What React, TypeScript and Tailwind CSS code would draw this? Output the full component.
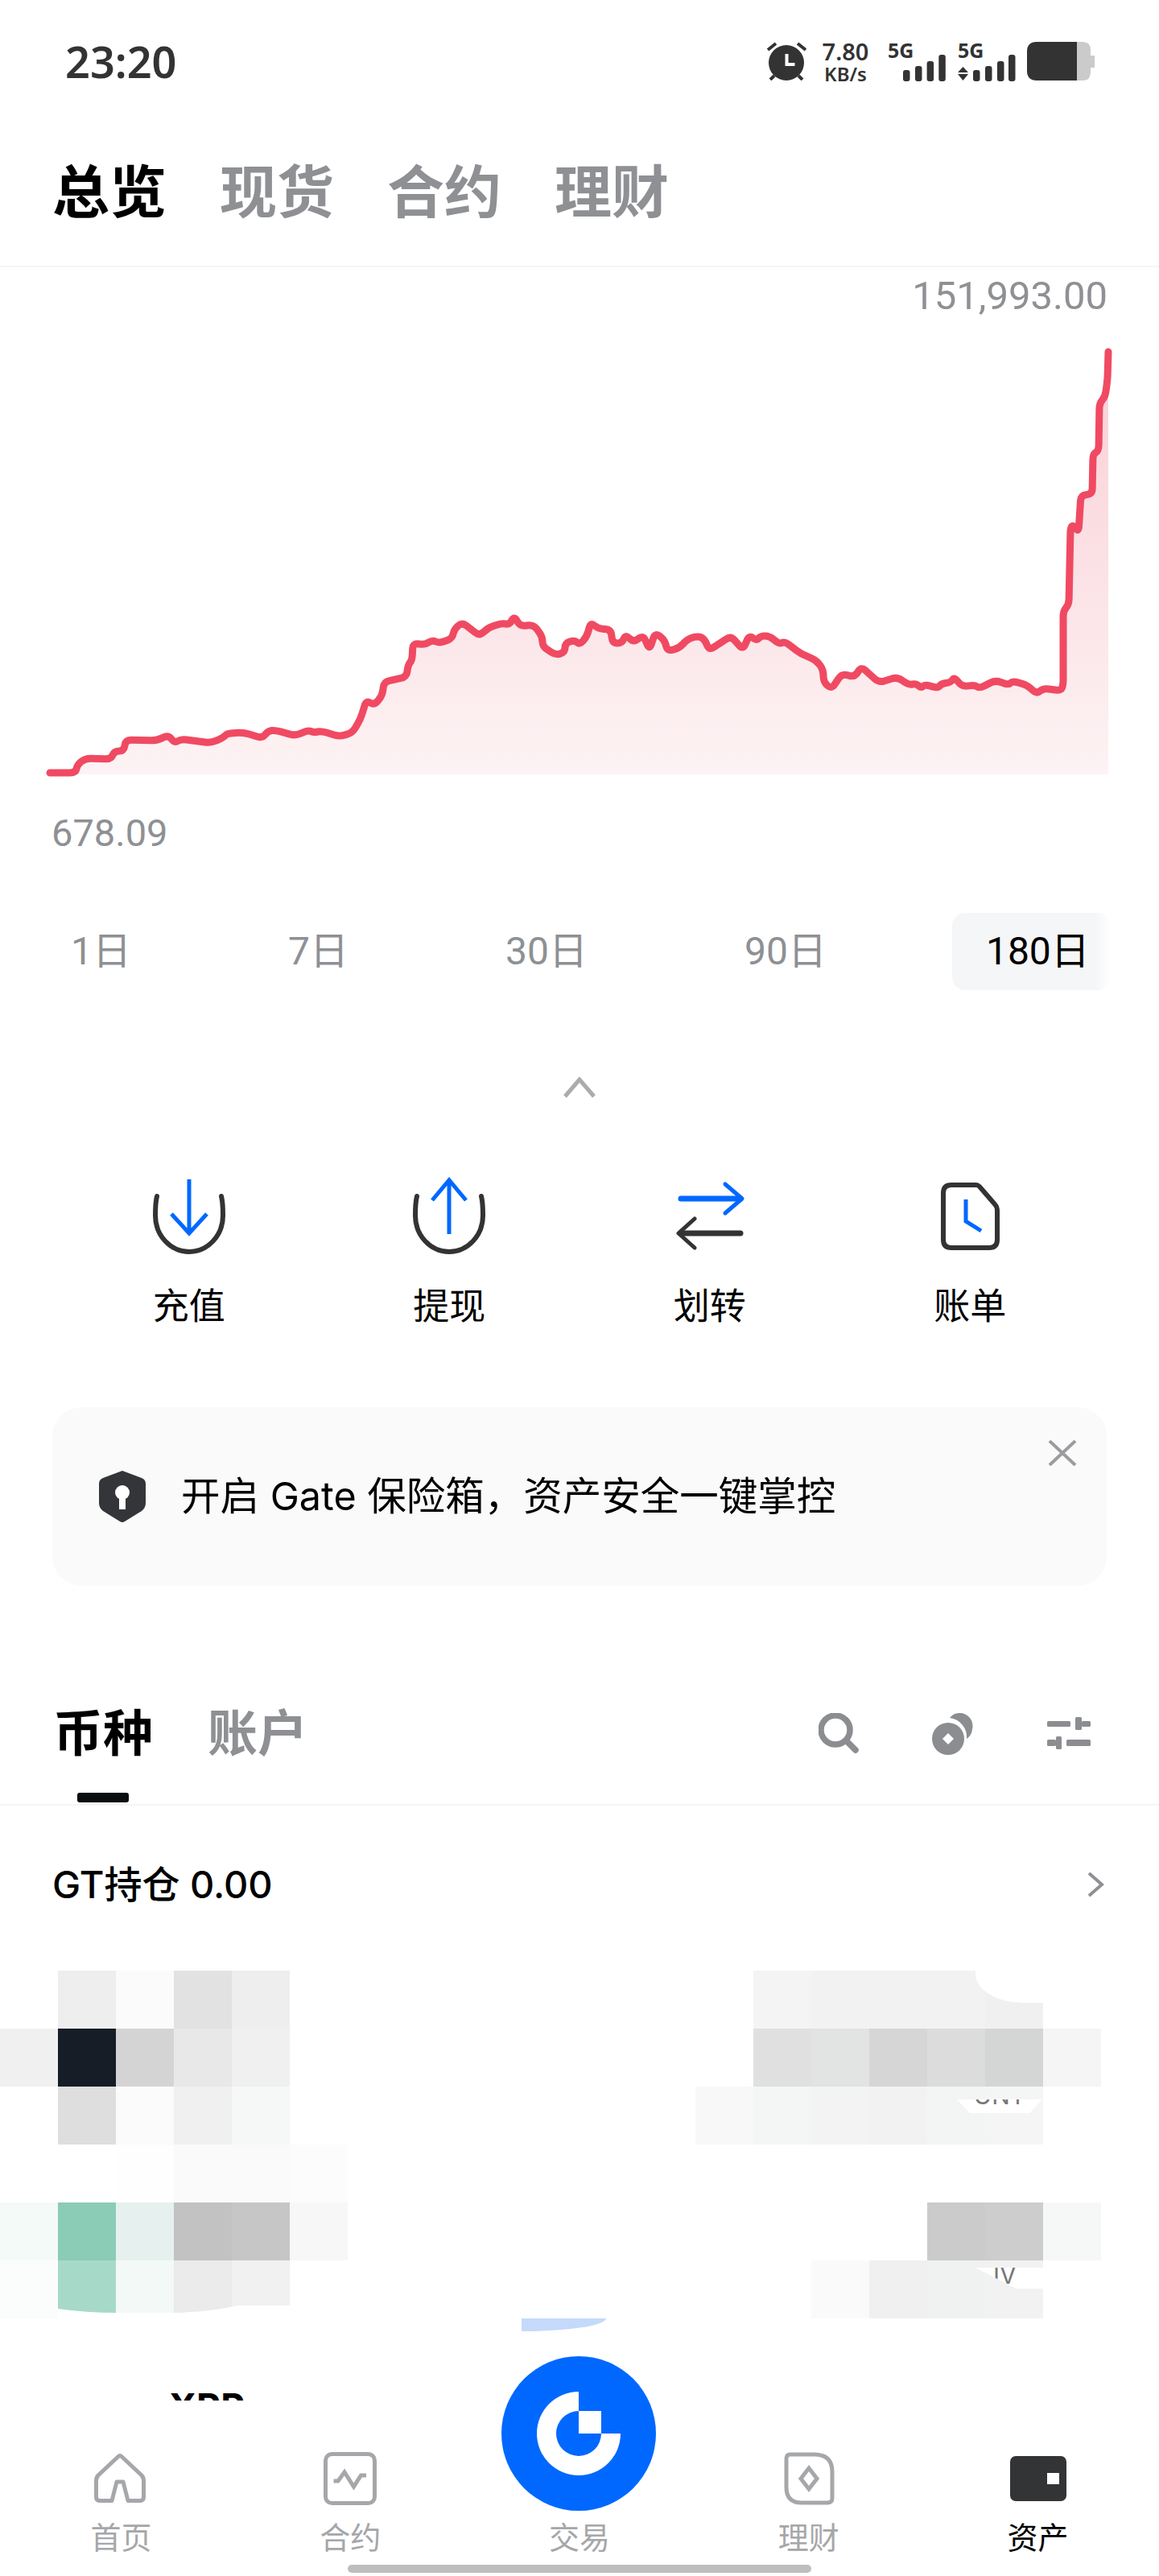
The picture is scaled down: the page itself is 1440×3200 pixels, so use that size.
const chartPoints = `62,960 94,960 96,950 106,942 138,943 142,933 154,933 156,919 195,920 209,913 217,923 225,918 262,923 278,916 282,911 303,910 326,917 333,908 342,907 367,914 383,907 390,910 399,908 422,915 438,910 448,893 455,870 465,876 475,864 477,847 505,841 507,826 512,820 513,799 528,801 537,795 546,799 562,793 564,782 574,773 596,790 606,780 624,774 633,776 639,765 646,778 663,776 674,791 674,803 691,814 702,810 702,799 714,795 720,801 729,791 734,773 743,781 759,782 761,799 773,799 777,788 787,798 799,789 807,807 814,786 826,795 829,809 844,805 855,793 869,790 876,795 881,808 908,790 923,807 931,789 940,796 945,790 956,790 968,800 975,797 995,812 1014,820 1023,832 1023,847 1033,856 1046,837 1062,841 1070,828 1092,848 1115,841 1129,851 1138,849 1145,855 1149,850 1165,855 1170,849 1181,848 1186,841 1195,853 1211,851 1217,855 1237,845 1253,851 1258,846 1276,851 1288,862 1296,855 1318,858 1321,851 1321,759 1328,751 1330,656 1333,652 1340,661 1343,615 1357,614 1358,564 1365,560 1366,501 1373,493 1376,472 1377,437`

// rounds the stair corners of the price line
function roundedPath(raw: string) {
  const pts = raw.split(' ').map((p) => p.split(',').map(Number))
  let d = `M${pts[0][0]} ${pts[0][1]}`
  for (let i = 1; i < pts.length - 1; i++) {
    const [x, y] = pts[i]
    const step = (o: number[]) => {
      const len = Math.hypot(o[0] - x, o[1] - y)
      const r = Math.min(7, len / 2)
      return [x + ((o[0] - x) / len) * r, y + ((o[1] - y) / len) * r]
    }
    const a = step(pts[i - 1])
    const b = step(pts[i + 1])
    d += ` L${a[0]} ${a[1]} Q${x} ${y} ${b[0]} ${b[1]}`
  }
  const last = pts[pts.length - 1]
  return `${d} L${last[0]} ${last[1]}`
}

// pixelated area of the coin list
const mosaic = [
  ['#fff', '#eeeeee', '#fbfbfb', '#e2e2e2', '#eeeeee', '#fff', '#fff', '#fff', '#fff', '#fff', '#fff', '#fff', '#fff', '#f4f4f4', '#f2f2f2', '#f2f2f2', '#f2f2f2', '#f0f0f0', '#fff', '#fff'],
  ['#f0f0f0', '#161d26', '#d4d4d4', '#e8e8e8', '#f0f0f0', '#fff', '#fff', '#fff', '#fff', '#fff', '#fff', '#fff', '#fff', '#e0e0e0', '#e2e3e3', '#d6d6d6', '#dcdcdc', '#d4d5d5', '#f5f5f5', '#fff'],
  ['#fff', '#dedede', '#fbfbfb', '#f0f0f0', '#f6f7f7', '#fff', '#fff', '#fff', '#fff', '#fff', '#fff', '#fff', '#f8f8f8', '#f4f5f5', '#f3f3f3', '#f2f2f2', '#f3f4f4', '#f5f5f5', '#fff', '#fff'],
  ['#fff', '#fff', '#fefefe', '#fafafa', '#fafafa', '#fcfcfc', '#fff', '#fff', '#fff', '#fff', '#fff', '#fff', '#fff', '#fff', '#fff', '#fff', '#fff', '#fff', '#fff', '#fff'],
  ['#f3faf8', '#8bccb6', '#e6f1ef', '#c2c2c2', '#c6c6c6', '#f7f7f7', '#fff', '#fff', '#fff', '#fff', '#fff', '#fff', '#fff', '#fff', '#fff', '#fff', '#cbcbcb', '#cdcdcd', '#f6f7f7', '#fff'],
  ['#fbfdfc', '#a7d9c8', '#f3f9f7', '#ebebeb', '#f1f1f1', '#fff', '#fff', '#fff', '#fff', '#fff', '#fff', '#fff', '#fff', '#fff', '#fafafa', '#f0f0f0', '#f0f1f1', '#f2f2f2', '#fff', '#fff'],
]

function Bars({ withArrows }: { withArrows?: boolean }) {
  const xs = withArrows ? [19, 34, 49, 63] : [0, 15, 29.6, 44.3]
  const hs = [14, 19, 25, 33]
  return (
    <svg width={withArrows ? 72 : 53} height="33" viewBox={`0 0 ${withArrows ? 72 : 53} 33`} className={withArrows ? '' : 'ml-[19px]'}>
      {xs.map((x, i) => (
        <rect key={x} x={x} y={33 - hs[i]} width="8.5" height={hs[i]} rx="3" fill="#333" />
      ))}
      {withArrows && <path d="M6.5 15 L13 22 H0 Z M0 24 H13 L6.5 32 Z" fill="#333" />}
    </svg>
  )
}

function StatusBar() {
  return (
    <div className="h-[152px] flex justify-between pl-[81px] pr-[80px] text-[#333] font-['Noto_Sans',sans-serif]">
      <div className="pt-[44px] text-[54px] leading-[64px] font-semibold">23:20</div>
      <div className="pt-[52px] flex items-start">
        <svg width="50" height="48" viewBox="0 0 50 48" className="mr-[19px]">
          <circle cx="25" cy="26" r="22" fill="#333" />
          <path d="M2 10 L12 2 M39 2 L49 10 M5 47 L10 42 M45 47 L40 42" stroke="#333" strokeWidth="4" />
          <path d="M25.5 15 V28 H35.5" stroke="#fff" strokeWidth="4" fill="none" />
        </svg>
        <div className="w-[59px] mr-[23px] flex flex-col items-center font-semibold">
          <div className="text-[29px] leading-[24px] h-[30px] whitespace-nowrap">7.80</div>
          <div className="text-[24px] leading-[20px] whitespace-nowrap">KB/s</div>
        </div>
        <div className="w-[72px] mr-[15px] flex flex-col">
          <div className="text-[25px] leading-[20px] font-bold h-[16px] whitespace-nowrap">5G</div>
          <Bars />
        </div>
        <div className="w-[72px] mr-[14px] flex flex-col">
          <div className="text-[25px] leading-[20px] font-bold h-[16px] whitespace-nowrap">5G</div>
          <Bars withArrows />
        </div>
        <svg width="84" height="48" viewBox="0 0 84 48">
          <path d="M62 0 H69 Q79 0 79 10 V17 H84 V32 H79 V38 Q79 48 69 48 H62 Z" fill="#cbcbcb" />
          <path d="M12 0 H62 V48 H12 Q0 48 0 36 V12 Q0 0 12 0 Z" fill="#333" />
        </svg>
      </div>
    </div>
  )
}

function TopTabs() {
  const tabs = ['总览', '现货', '合约', '理财']
  return (
    <div className="h-[180px] border-b-2 border-[#f5f5f5] flex gap-[66px] pl-[65px] pt-[48px]">
      {tabs.map((t, i) => (
        <div key={t} className={i === 0 ? 'text-[71px] leading-[76px] font-bold text-black' : 'text-[71px] leading-[76px] font-semibold text-[#8e9094]'}>
          {t}
        </div>
      ))}
    </div>
  )
}

function Chart() {
  const line = roundedPath(chartPoints)
  return (
    <svg viewBox="0 425 1440 545" className="block w-full h-[545px]">
      <defs>
        <linearGradient id="chartFill" gradientUnits="userSpaceOnUse" x1="0" y1="437" x2="0" y2="962">
          <stop offset="0" stopColor="#f9cfd6" />
          <stop offset="1" stopColor="#fdf3f4" />
        </linearGradient>
      </defs>
      <path d={`${line} L1377 962 L62 962 Z`} fill="url(#chartFill)" />
      <path d={line} fill="none" stroke="#f04a63" strokeWidth="9" strokeLinejoin="round" strokeLinecap="round" />
    </svg>
  )
}

function PeriodRow() {
  const periods = ['1日', '7日', '30日', '90日']
  return (
    <div className="h-[96px] flex items-center gap-[195px] pl-[88px] text-[48px] text-[#8e9094] font-['Roboto','Noto_Sans_CJK_SC',sans-serif]">
      {periods.map((p) => (
        <span key={p} className="whitespace-nowrap">{p}</span>
      ))}
      <span className="-ml-[39px] h-[96px] w-[197px] shrink-0 pl-[42px] flex items-center whitespace-nowrap text-black rounded-[16px] bg-linear-to-r from-[#f5f6f7] from-90% to-white">
        180日
      </span>
    </div>
  )
}

function ActionRow() {
  const arc = 'M10 26 C8.5 32 8 40 8 50 A42 45 0 0 0 92 50 C92 40 91.5 32 90 26'
  const actions = [
    {
      label: '充值',
      icon: (
        <>
          <path d={arc} fill="none" stroke="#333" strokeWidth="6" strokeLinecap="round" />
          <path d="M50 5 V70 M28 48 L50 72 L72 48" fill="none" stroke="#0068ff" strokeWidth="5" />
        </>
      ),
    },
    {
      label: '提现',
      icon: (
        <>
          <path d={arc} fill="none" stroke="#333" strokeWidth="6" strokeLinecap="round" />
          <path d="M50 73 V8 M29 31 L50 6 L71 31" fill="none" stroke="#0068ff" strokeWidth="5" />
        </>
      ),
    },
    {
      label: '划转',
      icon: (
        <>
          <path d="M14 29 H88" stroke="#0068ff" strokeWidth="7" strokeLinecap="round" />
          <path d="M69 11 L90 29 L69 47" fill="none" stroke="#0068ff" strokeWidth="5" strokeLinecap="round" strokeLinejoin="round" />
          <path d="M14 72 H88" stroke="#333" strokeWidth="7" strokeLinecap="round" />
          <path d="M31 54 L11 72 L31 90" fill="none" stroke="#333" strokeWidth="5" strokeLinecap="round" strokeLinejoin="round" />
        </>
      ),
    },
    {
      label: '账单',
      icon: (
        <>
          <path d="M27 12 H58 Q60 12 62 14 L81 36 Q84 39 84 44 V80 Q84 90 74 90 H27 Q17 90 17 80 V22 Q17 12 27 12 Z" fill="none" stroke="#333" strokeWidth="6" />
          <path d="M45 30 V57 L64 69" fill="none" stroke="#0068ff" strokeWidth="5" />
        </>
      ),
    },
  ]
  return (
    <div className="grid grid-cols-4 px-[73px]">
      {actions.map((a) => (
        <div key={a.label} className="flex flex-col items-center">
          <svg width="100" height="100" viewBox="0 0 100 100">
            {a.icon}
          </svg>
          <div className="mt-[40px] text-[45px] leading-[46px] text-black">{a.label}</div>
        </div>
      ))}
    </div>
  )
}

function SafeBanner() {
  return (
    <div className="relative mx-[65px] h-[222px] rounded-[36px] bg-[#fafafb] flex items-center pl-[58px]">
      <svg width="58" height="65" viewBox="0 0 58 65" className="mr-[44px]">
        <path d="M29 0 L53 9 Q58 11 58 16 V40 Q58 46 53 50 L32 63 Q29 65 26 63 L5 50 Q0 46 0 40 V16 Q0 11 5 9 Z" fill="#333538" />
        <circle cx="29" cy="27" r="9" fill="#fff" />
        <rect x="25" y="30" width="8" height="18" fill="#fff" />
      </svg>
      <div className="text-[48.5px] leading-[56px] text-black">开启 Gate 保险箱，资产安全一键掌控</div>
      <svg width="36" height="32" viewBox="0 0 36 32" className="absolute right-[37px] top-[41px]">
        <path d="M2 1 L34 31 M34 1 L2 31" stroke="#9a9c9f" strokeWidth="4" />
      </svg>
    </div>
  )
}

function CoinTabs() {
  return (
    <div className="h-[133px] border-b-2 border-[#f5f5f5] flex pl-[66px] pr-[85px] pt-[13px]">
      <div className="flex flex-col items-center">
        <div className="text-[62px] leading-[62px] font-bold text-black">币种</div>
        <div className="mt-[42px] w-[64px] h-[12px] rounded-[3px] bg-[#0a0d10]" />
      </div>
      <div className="ml-[68px] text-[62px] leading-[62px] font-semibold text-[#8e9094]">账户</div>
      <div className="ml-auto flex items-start gap-[91px] pt-[5px] text-[#8b8d90]">
        <svg width="50" height="50" viewBox="0 0 50 50">
          <circle cx="21" cy="21" r="18" fill="none" stroke="#8b8d90" strokeWidth="7.5" />
          <path d="M34 34 L46 46" stroke="#8b8d90" strokeWidth="7.5" strokeLinecap="round" />
        </svg>
        <svg width="52" height="52" viewBox="0 0 52 52">
          <path d="M22 6 A16 16 0 0 1 50 20 A16 16 0 0 1 43 32 A24 24 0 0 0 22 6 Z" fill="#8b8d90" />
          <circle cx="20" cy="32" r="20" fill="#8b8d90" />
          <path d="M20 25 L27 32 L20 39 L13 32 Z" fill="#fff" />
        </svg>
        <svg width="54" height="40" viewBox="0 0 54 40" className="mt-[5px]">
          <rect x="0" y="5" width="29" height="7" rx="1.5" fill="#8b8d90" />
          <rect x="35" y="0" width="8" height="16" rx="1.5" fill="#8b8d90" />
          <rect x="43" y="5" width="11" height="7" rx="1.5" fill="#8b8d90" />
          <rect x="0" y="28" width="11" height="8" rx="1.5" fill="#8b8d90" />
          <rect x="11" y="24" width="7" height="16" rx="1.5" fill="#8b8d90" />
          <rect x="24" y="28" width="30" height="8" rx="1.5" fill="#8b8d90" />
        </svg>
      </div>
    </div>
  )
}

function Mosaic() {
  return (
    <div className="relative grid grid-cols-[repeat(20,72px)] auto-rows-[72px]">
      {mosaic.flat().map((color, i) => (
        <div key={i} style={{ backgroundColor: color }} />
      ))}
      <div className="absolute left-[1212px] top-0 w-[84px] h-[40px] bg-white rounded-bl-[60px_36px]" />
      <div className="absolute left-[1189px] top-[160px] w-[106px] h-[17px] bg-white overflow-hidden text-[30px] leading-[30px] text-[#777] text-center [clip-path:polygon(0_0,100%_0,85%_100%,15%_100%)]">
        <span className="block -mt-[20px]">UNT</span>
      </div>
      <div className="absolute left-[1212px] top-[369px] w-[84px] h-[26px] bg-white overflow-hidden text-[30px] leading-[30px] text-[#777] [clip-path:polygon(0_0,100%_0,100%_100%,60%_100%)]">
        <span className="block pl-[22px] -mt-[6px]">IV</span>
      </div>
      <svg width="288" height="20" viewBox="0 0 288 20" className="absolute left-[72px] bottom-0">
        <path d="M0 8 Q35 13 72 13 L144 13 Q190 12 222 4 L288 4 V20 H0 Z" fill="#fff" />
      </svg>
    </div>
  )
}

function BottomNav() {
  const gray = '#a5a7aa'
  const items = [
    {
      label: '首页',
      icon: (
        <svg width="66" height="66" viewBox="0 0 66 66">
          <path d="M30 5.5 Q32 3.5 34 5.5 L58 28 Q61.5 31 61.5 35 V56 Q61.5 60.5 57 60.5 H42 L36 37 H28 L22 60.5 H7 Q2.5 60.5 2.5 56 V35 Q2.5 31 6 28 Z" fill="none" stroke={gray} strokeWidth="5" strokeLinejoin="round" />
        </svg>
      ),
    },
    {
      label: '合约',
      icon: (
        <svg width="66" height="66" viewBox="0 0 66 66">
          <rect x="2.5" y="2.5" width="61" height="61" rx="8" fill="none" stroke={gray} strokeWidth="5" />
          <path d="M12.5 36 H18 L26 25 L37.5 43 L46.5 29 H53" fill="none" stroke={gray} strokeWidth="5" />
        </svg>
      ),
    },
    { label: '交易', icon: <div className="h-[66px]" /> },
    {
      label: '理财',
      icon: (
        <svg width="66" height="66" viewBox="0 0 66 66">
          <path d="M10 3 H40 Q62 3 62 25 V57 Q62 63 56 63 H24 Q5 63 5 44 V8 Q5 3 10 3 Z" fill="none" stroke={gray} strokeWidth="5" />
          <path d="M33 20 L43 33 L33 46 L23 33 Z" fill="none" stroke={gray} strokeWidth="5" />
        </svg>
      ),
    },
    {
      label: '资产',
      active: true,
      icon: (
        <svg width="70" height="66" viewBox="0 0 70 66">
          <rect x="0" y="5" width="70" height="56" rx="7" fill="#333436" />
          <rect x="46" y="26" width="15" height="14" fill="#fff" />
        </svg>
      ),
    },
  ]
  return (
    <div className="relative h-[218px] bg-white pt-[64px]">
      <div className="grid grid-cols-5 px-2">
        {items.map((item) => (
          <div key={item.label} className="flex flex-col items-center">
            {item.icon}
            <div className={item.active ? 'mt-[21px] text-[38px] leading-[38px] text-black' : 'mt-[21px] text-[38px] leading-[38px] text-[#a5a7aa]'}>
              {item.label}
            </div>
          </div>
        ))}
      </div>
      <div className="mt-[15px] mx-auto w-[576px] h-[10px] rounded-full bg-[#bebebe]" />
      <svg width="192" height="192" viewBox="0 0 192 192" className="absolute left-[623px] -top-[55px]">
        <circle cx="96" cy="96" r="96" fill="#0068ff" />
        <path d="M96 44 A52 52 0 1 0 148 96 L124 96 A28 28 0 1 1 96 68 Z" fill="#fff" />
        <rect x="96" y="68" width="28" height="28" fill="#fff" />
      </svg>
    </div>
  )
}

export default function App() {
  return (
    <main className="w-[1440px] h-[3200px] overflow-hidden bg-white font-['Inter','Noto_Sans_CJK_SC',sans-serif]">
      <StatusBar />
      <TopTabs />

      <div className="h-[93px] pt-[16px] pr-[64px] text-right text-[49px] leading-[40px] text-[#8e9094] font-['Roboto',sans-serif]">151,993.00</div>
      <Chart />
      <div className="h-[164px] pt-[45px] pl-[64px] text-[47px] leading-[40px] text-[#8e9094] font-['Roboto',sans-serif]">678.09</div>

      <PeriodRow />

      <div className="h-[230px] pt-[108px] flex justify-center">
        <svg width="42" height="26" viewBox="0 0 42 26">
          <path d="M3 24 L21 3 L39 24" fill="none" stroke="#aaacae" strokeWidth="5" />
        </svg>
      </div>

      <ActionRow />
      <div className="h-[102px]" />
      <SafeBanner />
      <div className="h-[140px]" />
      <CoinTabs />

      <div className="h-[196px] pl-[65px] pr-[68px] flex items-center justify-between text-[47px] font-medium text-black">
        <span>GT持仓 0.00</span>
        <svg width="22" height="32" viewBox="0 0 22 32">
          <path d="M3 2 L19 16 L3 30" fill="none" stroke="#8e9094" strokeWidth="4" />
        </svg>
      </div>
      <div className="h-[9px]" />

      <Mosaic />

      <div className="h-[102px] overflow-hidden">
        <div className="ml-[648px] w-[105px] h-[16px] bg-[#c5d9fb] rounded-br-[105px_16px]" />
        <div className="mt-[71px] ml-[210px] text-[46px] leading-[46px] font-bold text-black">XRP</div>
      </div>

      <BottomNav />
    </main>
  )
}
